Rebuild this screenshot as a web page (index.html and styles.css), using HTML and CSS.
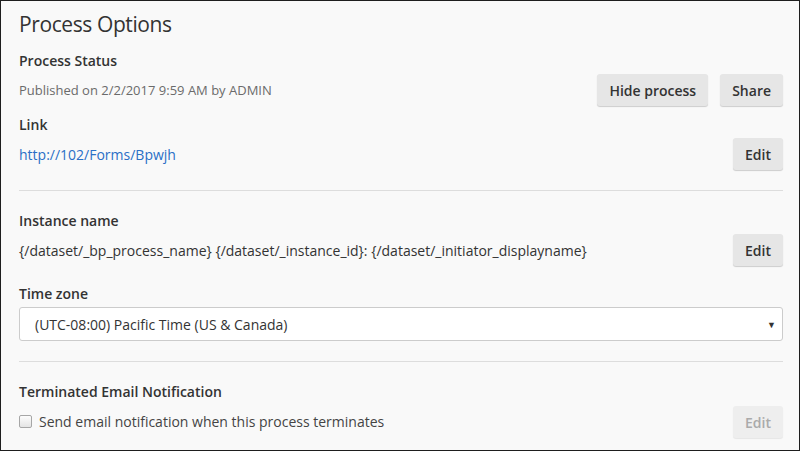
FILE: index.html
```html
<!DOCTYPE html>
<html lang="en">
<head>
<meta charset="utf-8">
<title>Process Options</title>
<link rel="stylesheet" href="styles.css">
</head>
<body>
<div class="page">
  <h1 class="title">Process Options</h1>

  <div class="label first">Process Status</div>
  <div class="row">
    <span class="muted">Published on 2/2/2017 9:59 AM by ADMIN</span>
    <div class="actions">
      <button class="btn">Hide process</button>
      <button class="btn">Share</button>
    </div>
  </div>

  <div class="label spaced">Link</div>
  <div class="row">
    <a class="link" href="#">http://102/Forms/Bpwjh</a>
    <button class="btn">Edit</button>
  </div>

  <hr class="divider">

  <div class="label">Instance name</div>
  <div class="row">
    <span class="text">{/dataset/_bp_process_name} {/dataset/_instance_id}: {/dataset/_initiator_displayname}</span>
    <button class="btn">Edit</button>
  </div>

  <div class="label zone">Time zone</div>
  <div class="select">
    <span class="select-text">(UTC-08:00) Pacific Time (US &amp; Canada)</span>
    <span class="caret">&#9660;</span>
  </div>

  <hr class="divider">

  <div class="label tight">Terminated Email Notification</div>
  <div class="row">
    <label class="check">
      <input type="checkbox" class="box">
      <span>Send email notification when this process terminates</span>
    </label>
    <button class="btn disabled" disabled>Edit</button>
  </div>
</div>
</body>
</html>
```
FILE: styles.css
```css
* { box-sizing: border-box; }
html, body { margin: 0; padding: 0; }
body {
  font-family: "Open Sans", "Liberation Sans", sans-serif;
  color: #333;
  background: #fff;
}
.page {
  width: 800px;
  height: 451px;
  border: 1px solid #1e1e1e;
  background: #f9f9f9;
  padding: 8px 16px 0 18px;
  overflow: hidden;
}
.title {
  margin: 0;
  font-size: 21px;
  font-weight: 400;
  line-height: 30px;
  letter-spacing: -0.4px;
  color: #333;
}
.label {
  font-size: 14px;
  font-weight: 600;
  line-height: 20px;
  color: #333;
  margin-bottom: 3px;
}
.label.first { margin-top: 12px; }
.label.spaced { margin-top: 9px; }
.label.zone { margin-top: 18px; }
.label.tight { margin-bottom: 4px; }
.row {
  display: flex;
  align-items: center;
  justify-content: space-between;
  min-height: 32px;
}
.actions { display: flex; gap: 12px; }
.muted { font-size: 13px; color: #6b6b6b; }
.text { font-size: 14px; color: #333; }
.link { font-size: 14px; color: #2a6fc6; text-decoration: none; }
.btn {
  font-family: inherit;
  font-size: 14px;
  font-weight: 600;
  color: #333;
  background: #e6e6e6;
  border: none;
  border-radius: 3px;
  height: 32px;
  padding: 0 12px;
  box-shadow: 0 1px 1px rgba(0, 0, 0, 0.18);
  cursor: pointer;
}
.btn.disabled {
  background: #eeeeee;
  color: #aaa;
  box-shadow: 0 1px 1px rgba(0, 0, 0, 0.08);
  cursor: default;
}
.divider {
  border: 0;
  border-top: 1px solid #ddd;
  margin: 20px 0 20px 0;
}
.select {
  position: relative;
  height: 34px;
  background: #fff;
  border: 1px solid #ccc;
  border-radius: 3px;
  display: flex;
  align-items: center;
  padding-left: 15px;
  font-size: 14px;
  color: #333;
}
.caret {
  position: absolute;
  right: 6px;
  top: 10px;
  font-size: 9px;
  color: #333;
}
.check {
  display: flex;
  align-items: center;
  gap: 7px;
  font-size: 14px;
  color: #444;
  margin-top: -2px;
}
.box {
  appearance: none;
  -webkit-appearance: none;
  margin: 0;
  width: 13px;
  height: 13px;
  border: 1px solid #a6a6a6;
  border-radius: 2px;
  background: linear-gradient(#fcfcfc, #e4e4e4);
}
```
